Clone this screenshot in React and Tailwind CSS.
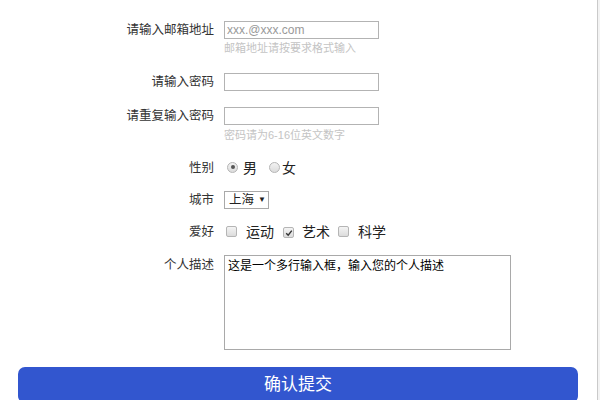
import { useState } from "react"

const font = { fontFamily: '"Liberation Sans", "Noto Sans CJK SC", sans-serif' }

function Label({ children, top }) {
    return (
        <div className={`w-[224px] shrink-0 pr-[10px] text-right text-[12.5px] leading-[14px] text-[#333] ${top ? "pt-[3px]" : ""}`}>
            {children}
        </div>
    )
}

function Radio({ checked }) {
    return (
        <span className="relative inline-block h-[11px] w-[11px] rounded-full border border-[#b5b5b5] bg-gradient-to-b from-[#f2f2f2] to-[#dcdcdc]">
            {checked && <span className="absolute left-[2.5px] top-[2.5px] h-[4px] w-[4px] rounded-full bg-[#555]" />}
        </span>
    )
}

function Check({ checked }) {
    return (
        <span className="relative inline-flex h-[11px] w-[11px] items-center justify-center rounded-[2px] border border-[#b5b5b5] bg-gradient-to-b from-[#f4f4f4] to-[#dcdcdc]">
            {checked && (
                <svg width="8" height="8" viewBox="0 0 8 8">
                    <path d="M1.2 4.2 L3.2 6.2 L6.8 1.6" fill="none" stroke="#333" strokeWidth="1.4" />
                </svg>
            )}
        </span>
    )
}

export default function App() {
    const [desc, setDesc] = useState("这是一个多行输入框，输入您的个人描述")

    return (
        <div className="flex h-[400px] w-[600px] overflow-hidden bg-white" style={font}>
            <div className="flex-1 pt-[21px]">
                <div className="flex items-center">
                    <Label>请输入邮箱地址</Label>
                    <input
                        placeholder="xxx.@xxx.com"
                        className="h-[18px] w-[155px] border border-[#b3b3b3] px-[2px] text-[12px] outline-none placeholder:text-[#999]"
                    />
                </div>
                <div className="ml-[224px] mt-[2px] text-[11px] leading-[14px] text-[#c4c4c4]">邮箱地址请按要求格式输入</div>

                <div className="mt-[18px] flex items-center">
                    <Label>请输入密码</Label>
                    <input type="password" className="h-[18px] w-[155px] border border-[#b3b3b3] outline-none" />
                </div>

                <div className="mt-[16px] flex items-center">
                    <Label>请重复输入密码</Label>
                    <input type="password" className="h-[18px] w-[155px] border border-[#b3b3b3] outline-none" />
                </div>
                <div className="ml-[224px] mt-[3px] text-[11px] leading-[14px] text-[#c4c4c4]">密码请为6-16位英文数字</div>

                <div className="mt-[17px] flex h-[18px] items-center">
                    <Label>性别</Label>
                    <div className="flex items-center text-[14px] text-[#222]">
                        <span className="ml-[3px]"><Radio checked /></span>
                        <span className="ml-[5px]">男</span>
                        <span className="ml-[12px]"><Radio /></span>
                        <span className="ml-[2px]">女</span>
                    </div>
                </div>

                <div className="mt-[14px] flex h-[18px] items-center">
                    <Label>城市</Label>
                    <div className="flex h-[18px] w-[45px] items-center border border-[#a9a9a9] pl-[4px] text-[12.5px] text-[#222]">
                        <span>上海</span>
                        <span className="ml-[4px] text-[8px]">▼</span>
                    </div>
                </div>

                <div className="mt-[14px] flex h-[18px] items-center">
                    <Label>爱好</Label>
                    <div className="flex items-center text-[14px] text-[#222]">
                        <span className="ml-[2px]"><Check /></span>
                        <span className="ml-[9px]">运动</span>
                        <span className="ml-[9px]"><Check checked /></span>
                        <span className="ml-[8px]">艺术</span>
                        <span className="ml-[8px]"><Check /></span>
                        <span className="ml-[9px]">科学</span>
                    </div>
                </div>

                <div className="mt-[14px] flex items-start">
                    <Label top>个人描述</Label>
                    <textarea
                        value={desc}
                        onChange={e => setDesc(e.target.value)}
                        className="h-[95px] w-[287px] resize-none border border-[#a9a9a9] px-[3px] py-[2px] text-[12px] leading-[16px] text-black outline-none"
                    />
                </div>

                <div className="ml-[18px] mt-[17px]">
                    <button className="h-[36px] w-[560px] rounded-[7px] bg-[#3256cf] text-[17px] text-white">确认提交</button>
                </div>
            </div>
            <div className="w-[3px] shrink-0 border-l border-[#cacaca] bg-[#f3f3f3]" />
        </div>
    )
}
